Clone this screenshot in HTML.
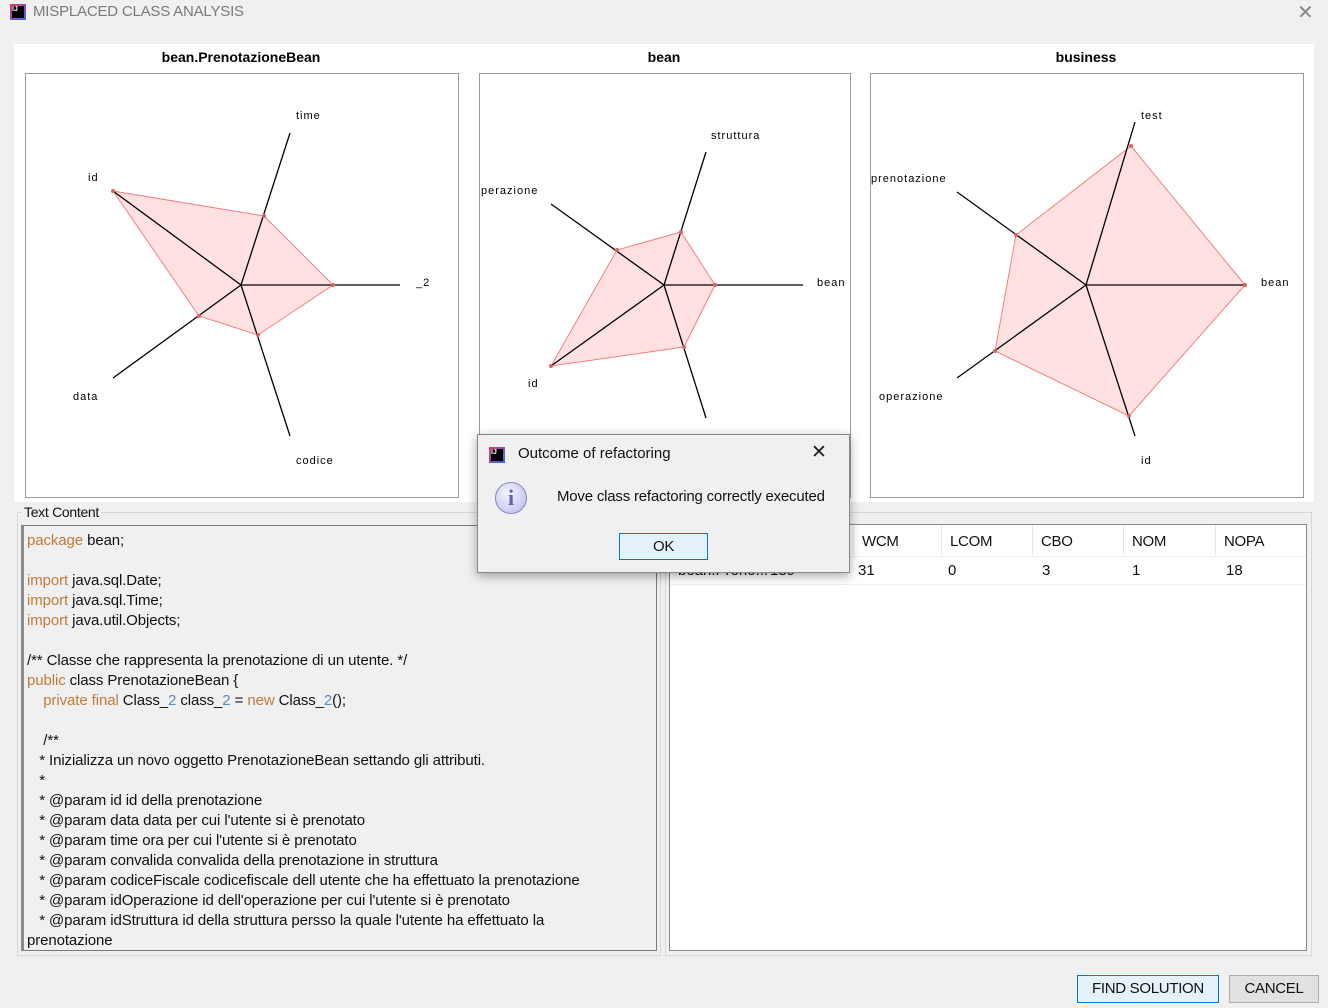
<!DOCTYPE html>
<html><head><meta charset="utf-8"><style>
*{margin:0;padding:0;box-sizing:border-box}
body{width:1328px;height:1008px;background:#f0f0f0;font-family:"Liberation Sans",sans-serif;position:relative;overflow:hidden}
.abs{position:absolute}
.code{position:absolute;left:21px;top:525px;width:636px;height:426px;background:#f0f0f0;border:1px solid #7a7a7a;border-left:3px solid #8a8a8a;overflow:hidden}
.code div{position:absolute;left:3px;font-size:15px;letter-spacing:-0.1px;color:#111;white-space:pre;line-height:20px}
.k{color:#c07a3a}
.n{color:#5a8ac0}
.tbl{position:absolute;left:669px;top:524px;width:638px;height:427px;background:#fff;border:1px solid #828790}
.th{position:absolute;top:0;height:30px;font-size:15px;letter-spacing:-0.3px;line-height:34px;border-right:1px solid #e5e5e5;padding-left:8px;color:#111}
.td{position:absolute;top:32px;height:28px;font-size:15px;line-height:28px;padding-left:8px;color:#111}
.btn{position:absolute;height:28px;font-size:15px;text-align:center;line-height:26px;color:#111;letter-spacing:-0.3px}
</style></head><body>
<div class="abs" style="left:10px;top:4px;width:16px;height:16px;background:linear-gradient(135deg,#f0306a,#2a6ef0);"><div style="position:absolute;left:2px;top:2px;width:12px;height:12px;background:#000;color:#fff;font-size:7px;font-weight:bold;line-height:8px">IJ</div></div>
<div class="abs" style="left:33px;top:3px;font-size:15px;color:#7a7a7a;letter-spacing:-0.2px">MISPLACED CLASS ANALYSIS</div>
<div class="abs" style="left:1297px;top:0px;font-size:20px;color:#888">✕</div>
<div class="abs" style="left:14px;top:44px;width:1300px;height:458px;background:#fff"></div>
<svg class="abs" style="left:0;top:0" width="1328" height="510" font-family="Liberation Sans, sans-serif">
<g font-weight="bold" font-size="14" text-anchor="middle" fill="#000">
<text x="241" y="62">bean.PrenotazioneBean</text><text x="664" y="62">bean</text><text x="1086" y="62">business</text></g>
<g fill="#fff" stroke="#9a9a9a"><rect x="25.5" y="73.5" width="433" height="424"/><rect x="479.5" y="73.5" width="371" height="424"/><rect x="870.5" y="73.5" width="433" height="424"/></g>
<g fill="rgba(255,120,120,0.22)" stroke="#f08080" stroke-width="1">
<polygon points="113,191 264,216 333,285 258,335 199,316"/>
<polygon points="681,232 715,285 684,347 551,366 617,250"/>
<polygon points="1131,146 1245,285 1129,416 995,351 1016,235"/></g>
<g stroke="#000" stroke-width="1.3">
<line x1="241" y1="285" x2="290" y2="133"/><line x1="241" y1="285" x2="400" y2="285"/><line x1="241" y1="285" x2="290" y2="436"/><line x1="241" y1="285" x2="113" y2="378"/><line x1="241" y1="285" x2="113" y2="191"/>
<line x1="664" y1="285" x2="706" y2="152"/><line x1="664" y1="285" x2="803" y2="285"/><line x1="664" y1="285" x2="706" y2="418"/><line x1="664" y1="285" x2="551" y2="366"/><line x1="664" y1="285" x2="551" y2="204"/>
<line x1="1086" y1="285" x2="1135" y2="122"/><line x1="1086" y1="285" x2="1245" y2="285"/><line x1="1086" y1="285" x2="1135" y2="436"/><line x1="1086" y1="285" x2="957" y2="378"/><line x1="1086" y1="285" x2="957" y2="192"/></g>
<g fill="#e06060">
<circle cx="113" cy="191" r="2"/><circle cx="264" cy="216" r="2"/><circle cx="333" cy="285" r="2"/><circle cx="258" cy="335" r="2"/><circle cx="199" cy="316" r="2"/>
<circle cx="681" cy="232" r="2"/><circle cx="715" cy="285" r="2"/><circle cx="684" cy="347" r="2"/><circle cx="551" cy="366" r="2"/><circle cx="617" cy="250" r="2"/>
<circle cx="1131" cy="146" r="2"/><circle cx="1245" cy="285" r="2"/><circle cx="1129" cy="416" r="2"/><circle cx="995" cy="351" r="2"/><circle cx="1016" cy="235" r="2"/></g>
<g font-size="11" fill="#000" letter-spacing="1">
<text x="296" y="119">time</text><text x="88" y="181">id</text><text x="416" y="286">_2</text><text x="73" y="400">data</text><text x="296" y="464">codice</text>
<text x="711" y="139">struttura</text><text x="481" y="194">perazione</text><text x="817" y="286">bean</text><text x="528" y="387">id</text>
<text x="1141" y="119">test</text><text x="871" y="182">prenotazione</text><text x="1261" y="286">bean</text><text x="879" y="400">operazione</text><text x="1141" y="464">id</text></g>
</svg>
<div class="abs" style="left:17px;top:512px;width:644px;height:444px;border:1px solid #d0d8e0"></div>
<div class="abs" style="left:665px;top:512px;width:647px;height:444px;border:1px solid #d0d8e0"></div>
<div class="abs" style="left:22px;top:504px;font-size:14px;background:#f0f0f0;padding:0 2px;color:#111;letter-spacing:-0.3px">Text Content</div>
<div class="code">
<div style="top:5px"><span class="k">package</span> bean;</div>
<div style="top:45px"><span class="k">import</span> java.sql.Date;</div>
<div style="top:65px"><span class="k">import</span> java.sql.Time;</div>
<div style="top:85px"><span class="k">import</span> java.util.Objects;</div>
<div style="top:125px">/** Classe che rappresenta la prenotazione di un utente. */</div>
<div style="top:145px"><span class="k">public</span> class PrenotazioneBean {</div>
<div style="top:165px">    <span class="k">private final</span> Class_<span class="n">2</span> class_<span class="n">2</span> = <span class="k">new</span> Class_<span class="n">2</span>();</div>
<div style="top:205px">    /**</div>
<div style="top:225px">   * Inizializza un novo oggetto PrenotazioneBean settando gli attributi.</div>
<div style="top:245px">   *</div>
<div style="top:265px">   * @param id id della prenotazione</div>
<div style="top:285px">   * @param data data per cui l'utente si è prenotato</div>
<div style="top:305px">   * @param time ora per cui l'utente si è prenotato</div>
<div style="top:325px">   * @param convalida convalida della prenotazione in struttura</div>
<div style="top:345px">   * @param codiceFiscale codicefiscale dell utente che ha effettuato la prenotazione</div>
<div style="top:365px">   * @param idOperazione id dell'operazione per cui l'utente si è prenotato</div>
<div style="top:385px">   * @param idStruttura id della struttura persso la quale l'utente ha effettuato la</div>
<div style="top:405px">prenotazione</div>
</div>
<div class="tbl">
<div class="th" style="left:0;width:92px"></div><div class="th" style="left:92px;width:92px"></div>
<div class="th" style="left:184px;width:88px">WCM</div><div class="th" style="left:272px;width:91px">LCOM</div><div class="th" style="left:363px;width:91px">CBO</div><div class="th" style="left:454px;width:92px">NOM</div><div class="th" style="left:546px;width:92px;border:none">NOPA</div>
<div class="abs" style="left:0;top:31px;width:636px;height:1px;background:#eee"></div>
<div class="td" style="left:0;width:92px">bean.Preno...</div><div class="td" style="left:92px;width:92px">189</div>
<div class="td" style="left:180px">31</div><div class="td" style="left:270px">0</div><div class="td" style="left:364px">3</div><div class="td" style="left:454px">1</div><div class="td" style="left:548px">18</div>
<div class="abs" style="left:0;top:59px;width:636px;height:1px;background:#f0f0f0"></div>
</div>
<div class="abs" style="left:477px;top:434px;width:373px;height:139px;background:#f0f0f0;border:1px solid #888;box-shadow:0 3px 10px rgba(0,0,0,0.35)">
<div class="abs" style="left:11px;top:12px;width:16px;height:16px;background:linear-gradient(135deg,#f0306a,#2a6ef0)"><div style="position:absolute;left:2px;top:2px;width:12px;height:12px;background:#000;color:#fff;font-size:7px;font-weight:bold;line-height:8px">IJ</div></div>
<div class="abs" style="left:40px;top:10px;font-size:15px;color:#111">Outcome of refactoring</div>
<div class="abs" style="left:333px;top:6px;font-size:19px;color:#222">✕</div>
<div class="abs" style="left:17px;top:47px;width:32px;height:32px;border-radius:50%;background:radial-gradient(circle at 40% 35%,#f4f4ff,#b8b8e8);border:1px solid #8888c0;color:#6060b0;font-size:22px;font-weight:bold;text-align:center;line-height:30px;font-family:'Liberation Serif',serif">i</div>
<div class="abs" style="left:79px;top:53px;font-size:15px;color:#111;letter-spacing:-0.2px">Move class refactoring correctly executed</div>
<div class="btn" style="left:141px;top:98px;width:89px;height:27px;background:#e5f1fb;border:1px solid #0078d7">OK</div>
</div>
<div class="btn" style="left:1077px;top:975px;width:142px;background:#e5f1fb;border:1px solid #0078d7">FIND SOLUTION</div>
<div class="btn" style="left:1229px;top:975px;width:90px;background:#e1e1e1;border:1px solid #adadad">CANCEL</div>
</body></html>
